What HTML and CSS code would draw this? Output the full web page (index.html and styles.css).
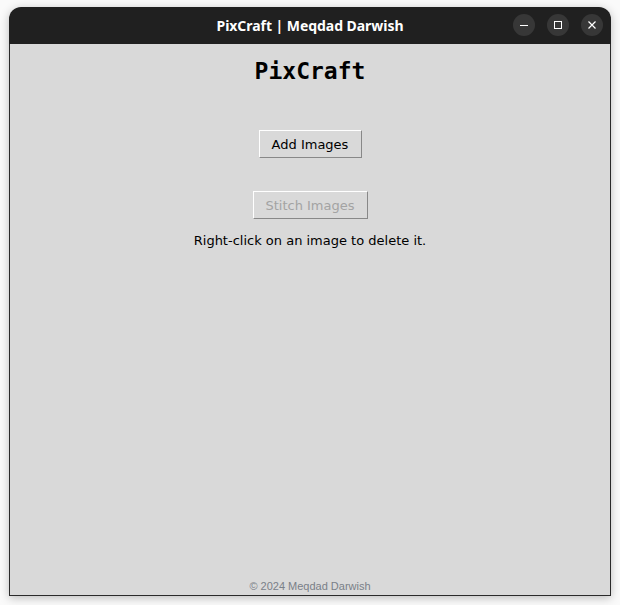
FILE: index.html
```html
<!DOCTYPE html>
<html>
<head>
<meta charset="utf-8">
<link rel="stylesheet" href="styles.css">
</head>
<body>
<div class="window">
  <div class="titlebar">
    <div class="title">PixCraft | Meqdad Darwish</div>
    <div class="controls">
      <div class="ctl"><svg width="10" height="10" viewBox="0 0 10 10"><rect x="1" y="5" width="8" height="1" fill="#fff"/></svg></div>
      <div class="ctl"><svg width="10" height="10" viewBox="0 0 10 10"><rect x="1.5" y="1.5" width="7" height="7" fill="none" stroke="#fff" stroke-width="1"/></svg></div>
      <div class="ctl"><svg width="10" height="10" viewBox="0 0 10 10"><path d="M1.5 1.5 L8.5 8.5 M8.5 1.5 L1.5 8.5" stroke="#fff" stroke-width="1.2"/></svg></div>
    </div>
  </div>
  <div class="content">
    <h1 class="app-title">PixCraft</h1>
    <button class="btn add">Add Images</button>
    <button class="btn stitch" disabled>Stitch Images</button>
    <p class="hint">Right-click on an image to delete it.</p>
    <div class="spacer"></div>
    <div class="footer">© 2024 Meqdad Darwish</div>
  </div>
</div>
</body>
</html>
```
FILE: styles.css
```css
html, body {
  margin: 0;
  padding: 0;
  background: #fafafa;
  width: 620px;
  height: 605px;
  overflow: hidden;
}
body {
  padding: 7px 9px 0 9px;
  box-sizing: border-box;
}
.window {
  width: 602px;
  height: 589px;
  border-radius: 12px 12px 0 0;
  box-shadow: 0 2px 10px rgba(0,0,0,0.25);
  display: flex;
  flex-direction: column;
  overflow: hidden;
}
.titlebar {
  height: 37px;
  background: #202020;
  position: relative;
  display: flex;
  align-items: center;
  justify-content: center;
  flex-shrink: 0;
}
.title {
  color: #ffffff;
  font-family: "Noto Sans", "DejaVu Sans", sans-serif;
  font-weight: bold;
  font-size: 14px;
  letter-spacing: -0.05px;
}
.controls {
  position: absolute;
  right: 8px;
  top: 7px;
  display: flex;
  gap: 12px;
}
.ctl {
  width: 22px;
  height: 22px;
  border-radius: 50%;
  background: #373737;
  display: flex;
  align-items: center;
  justify-content: center;
}
.content {
  flex: 1;
  background: #d9d9d9;
  border: 1px solid #2a2a2a;
  border-top: none;
  display: flex;
  flex-direction: column;
  align-items: center;
  font-family: "DejaVu Sans", sans-serif;
}
.app-title {
  font-family: "DejaVu Sans Mono", monospace;
  font-weight: bold;
  font-size: 23px;
  margin: 14px 0 0 0;
  line-height: 27px;
  color: #000;
}
.btn {
  font-family: "DejaVu Sans", sans-serif;
  font-size: 13px;
  background: #d9d9d9;
  color: #000;
  border: 1px solid;
  border-color: #ffffff #888888 #888888 #ffffff;
  padding: 0;
  height: 28px;
  box-sizing: border-box;
}
.add {
  width: 103px;
  margin-top: 45px;
}
.stitch {
  width: 115px;
  margin-top: 33px;
  color: #a3a3a3;
}
.hint {
  font-size: 13px;
  margin: 14px 0 0 0;
  color: #000;
}
.spacer { flex: 1; }
.footer {
  font-family: "Liberation Sans", Arial, sans-serif;
  font-size: 11px;
  color: #7a8088;
  margin-bottom: 3px;
}
```
